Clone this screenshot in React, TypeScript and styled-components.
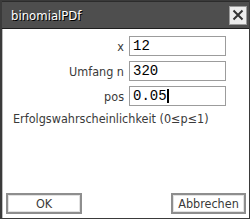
import styled, { createGlobalStyle } from "styled-components";

const GlobalStyle = createGlobalStyle`
  html, body {
    margin: 0;
    padding: 0;
    background: #ffffff;
  }
`;

const Window = styled.div`
  box-sizing: border-box;
  width: 250px;
  height: 219px;
  display: flex;
  flex-direction: column;
  border: 1px solid #3a3a3a;
  border-left-width: 2px;
  background: #ffffff;
  font-family: "DejaVu Sans Condensed", "Liberation Sans", sans-serif;
`;

const TitleBar = styled.div`
  display: flex;
  align-items: center;
  justify-content: space-between;
  height: 26px;
  padding: 0 2px 0 9px;
  background: #4e4e4e;
  border-top: 1px solid #2c2c2c;
  border-bottom: 1px solid #1e1e1e;
`;

const Title = styled.span`
  color: #ffffff;
  font-size: 13px;
  text-shadow: 1px 1px 0 #000000;
`;

const CloseButton = styled.button`
  box-sizing: border-box;
  width: 18px;
  height: 19px;
  padding: 0;
  display: flex;
  align-items: center;
  justify-content: center;
  background: #ececec;
  border: 1px solid #9a9a9a;
  cursor: pointer;
`;

const Body = styled.div`
  flex: 1;
  display: flex;
  flex-direction: column;
  padding: 7px 23px 0 0;
  border-left: 1px solid #bdbdbd;
`;

const Form = styled.div`
  display: grid;
  grid-template-columns: 1fr 97px;
  column-gap: 5px;
  row-gap: 5px;
`;

const Label = styled.label`
  justify-self: end;
  align-self: center;
  color: #3a3a3a;
  font-size: 12.5px;
`;

const Field = styled.div`
  box-sizing: border-box;
  height: 20px;
  display: flex;
  align-items: center;
  padding-left: 3px;
  border: 1px solid #9c9c9c;
  font-family: "Liberation Mono", monospace;
  font-size: 14px;
  color: #000000;
`;

const Caret = styled.span`
  display: inline-block;
  width: 2px;
  height: 14px;
  background: #000000;
`;

const Hint = styled.div`
  margin: 5px 0 0 10px;
  color: #3a3a3a;
  font-size: 12.5px;
  white-space: nowrap;
`;

const Footer = styled.div`
  margin-top: auto;
  display: flex;
  justify-content: space-between;
  padding: 0 3px 4px 3px;
  border-left: 1px solid #bdbdbd;
`;

const Button = styled.button<{ $width: number }>`
  box-sizing: border-box;
  width: ${(p) => p.$width}px;
  height: 21px;
  padding: 0;
  background: #ffffff;
  border: 2px solid #8e8e8e;
  box-shadow: inset 0 0 0 1px #e2e2e2;
  color: #3a3a3a;
  font-family: "DejaVu Sans Condensed", "Liberation Sans", sans-serif;
  font-size: 12.5px;
  cursor: pointer;
`;

const CloseIcon = () => (
  <svg width="12" height="12" viewBox="0 0 12 12">
    <path d="M1.5 1.5 L10.5 10.5 M10.5 1.5 L1.5 10.5" stroke="#333333" strokeWidth="2" />
  </svg>
);

const App = () => {
  return (
    <>
      <GlobalStyle />
      <Window>
        <TitleBar>
          <Title>binomialPDf</Title>
          <CloseButton aria-label="close">
            <CloseIcon />
          </CloseButton>
        </TitleBar>
        <Body>
          <Form>
            <Label>x</Label>
            <Field>12</Field>
            <Label>Umfang n</Label>
            <Field>320</Field>
            <Label>pos</Label>
            <Field>
              0.05
              <Caret />
            </Field>
          </Form>
          <Hint>Erfolgswahrscheinlichkeit (0≤p≤1)</Hint>
        </Body>
        <Footer>
          <Button $width={76}>OK</Button>
          <Button $width={75}>Abbrechen</Button>
        </Footer>
      </Window>
    </>
  );
};

export default App;
